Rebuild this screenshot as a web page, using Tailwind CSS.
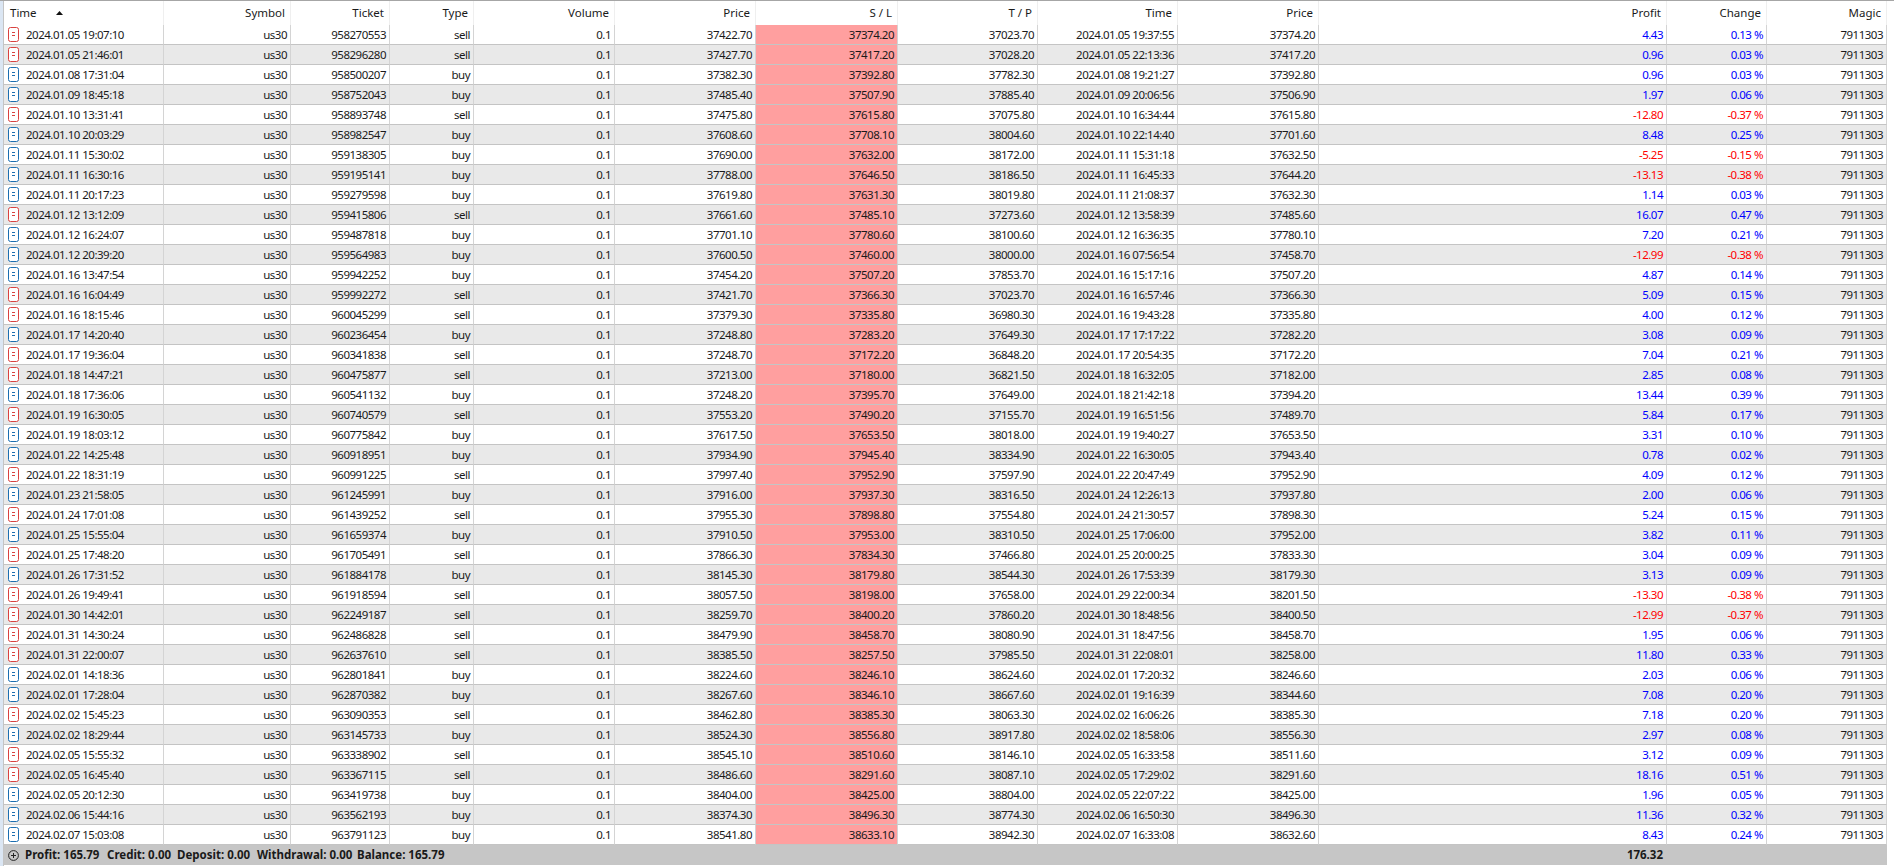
<!DOCTYPE html>
<html lang="en">
<head>
<meta charset="utf-8">
<title>History</title>
<script src="https://cdn.jsdelivr.net/npm/@tailwindcss/browser@4"></script>
</head>
<body class="bg-white">
<svg width="0" height="0" class="absolute">
<symbol id="s" viewBox="0 0 11 15"><rect x="0.5" y="0.5" width="10" height="14" rx="2" fill="#fff" stroke="#d9423f"/><path d="M4 5.5h3M4 8.5h3" stroke="#d9423f"/></symbol>
<symbol id="b" viewBox="0 0 11 15"><rect x="0.5" y="0.5" width="10" height="14" rx="2" fill="#fff" stroke="#1c6eb0"/><path d="M4 5.5h3M4 8.5h3" stroke="#1c6eb0"/></symbol>
</svg>
<div class="flex flex-col w-[1894px] h-[866px] overflow-hidden font-['Noto_Sans','Open_Sans',sans-serif] text-[11.5px] text-[#1a1a1a]">
<div class="h-px bg-[#a6a6a6]"></div>
<div class="flex flex-1">
<div class="w-[3px] bg-[#dbe6f3]"></div>
<div class="w-px bg-[#c4c4c4]"></div>
<div class="w-[1883px] flex flex-col">
<table class="table-fixed w-[1883px] border-separate border-spacing-0 [&_th]:h-[24px] [&_th]:font-normal [&_th]:p-0 [&_th]:pr-[5px] [&_th]:text-right [&_th]:border-r [&_th]:border-r-[#efefef] [&_td]:h-[20px] [&_td]:p-0 [&_td]:pr-[3px] [&_td]:text-right [&_td]:tracking-[-0.5px] [&_td]:leading-[19px] [&_td]:border-r [&_td]:border-b [&_td]:border-r-[#d4d4d4] [&_td]:border-b-[#c4c4c4] [&_tbody_tr:nth-child(even)]:bg-[#e9e9e9] [&_td:nth-child(7)]:bg-[#ff9f9f] [&_td:nth-child(11)]:text-[#0000ff] [&_td:nth-child(12)]:text-[#0000ff]">
<colgroup><col class="w-[160px]"><col class="w-[127px]"><col class="w-[99px]"><col class="w-[84px]"><col class="w-[141px]"><col class="w-[141px]"><col class="w-[142px]"><col class="w-[140px]"><col class="w-[140px]"><col class="w-[141px]"><col class="w-[348px]"><col class="w-[100px]"><col class="w-[120px]"></colgroup>
<thead><tr>
<th><div class="flex items-center pl-[6px]"><span class="w-[46px] text-left">Time</span><svg width="7" height="4" viewBox="0 0 7 4"><path d="M0 4L3.5 0L7 4Z" fill="#111"/></svg></div></th>
<th>Symbol</th><th>Ticket</th><th>Type</th><th>Volume</th><th>Price</th><th>S / L</th><th>T / P</th><th>Time</th><th>Price</th><th>Profit</th><th>Change</th><th>Magic</th>
</tr></thead>
<tbody>
<tr><td><div class="flex items-center gap-[7px] pl-[4px]"><svg width="11" height="15"><use href="#s"/></svg>2024.01.05 19:07:10</div></td><td>us30</td><td>958270553</td><td>sell</td><td>0.1</td><td>37422.70</td><td>37374.20</td><td>37023.70</td><td>2024.01.05 19:37:55</td><td>37374.20</td><td>4.43</td><td>0.13 %</td><td>7911303</td></tr>
<tr><td><div class="flex items-center gap-[7px] pl-[4px]"><svg width="11" height="15"><use href="#s"/></svg>2024.01.05 21:46:01</div></td><td>us30</td><td>958296280</td><td>sell</td><td>0.1</td><td>37427.70</td><td>37417.20</td><td>37028.20</td><td>2024.01.05 22:13:36</td><td>37417.20</td><td>0.96</td><td>0.03 %</td><td>7911303</td></tr>
<tr><td><div class="flex items-center gap-[7px] pl-[4px]"><svg width="11" height="15"><use href="#b"/></svg>2024.01.08 17:31:04</div></td><td>us30</td><td>958500207</td><td>buy</td><td>0.1</td><td>37382.30</td><td>37392.80</td><td>37782.30</td><td>2024.01.08 19:21:27</td><td>37392.80</td><td>0.96</td><td>0.03 %</td><td>7911303</td></tr>
<tr><td><div class="flex items-center gap-[7px] pl-[4px]"><svg width="11" height="15"><use href="#b"/></svg>2024.01.09 18:45:18</div></td><td>us30</td><td>958752043</td><td>buy</td><td>0.1</td><td>37485.40</td><td>37507.90</td><td>37885.40</td><td>2024.01.09 20:06:56</td><td>37506.90</td><td>1.97</td><td>0.06 %</td><td>7911303</td></tr>
<tr><td><div class="flex items-center gap-[7px] pl-[4px]"><svg width="11" height="15"><use href="#s"/></svg>2024.01.10 13:31:41</div></td><td>us30</td><td>958893748</td><td>sell</td><td>0.1</td><td>37475.80</td><td>37615.80</td><td>37075.80</td><td>2024.01.10 16:34:44</td><td>37615.80</td><td class="text-[#ff0000]!">-12.80</td><td class="text-[#ff0000]!">-0.37 %</td><td>7911303</td></tr>
<tr><td><div class="flex items-center gap-[7px] pl-[4px]"><svg width="11" height="15"><use href="#b"/></svg>2024.01.10 20:03:29</div></td><td>us30</td><td>958982547</td><td>buy</td><td>0.1</td><td>37608.60</td><td>37708.10</td><td>38004.60</td><td>2024.01.10 22:14:40</td><td>37701.60</td><td>8.48</td><td>0.25 %</td><td>7911303</td></tr>
<tr><td><div class="flex items-center gap-[7px] pl-[4px]"><svg width="11" height="15"><use href="#b"/></svg>2024.01.11 15:30:02</div></td><td>us30</td><td>959138305</td><td>buy</td><td>0.1</td><td>37690.00</td><td>37632.00</td><td>38172.00</td><td>2024.01.11 15:31:18</td><td>37632.50</td><td class="text-[#ff0000]!">-5.25</td><td class="text-[#ff0000]!">-0.15 %</td><td>7911303</td></tr>
<tr><td><div class="flex items-center gap-[7px] pl-[4px]"><svg width="11" height="15"><use href="#b"/></svg>2024.01.11 16:30:16</div></td><td>us30</td><td>959195141</td><td>buy</td><td>0.1</td><td>37788.00</td><td>37646.50</td><td>38186.50</td><td>2024.01.11 16:45:33</td><td>37644.20</td><td class="text-[#ff0000]!">-13.13</td><td class="text-[#ff0000]!">-0.38 %</td><td>7911303</td></tr>
<tr><td><div class="flex items-center gap-[7px] pl-[4px]"><svg width="11" height="15"><use href="#b"/></svg>2024.01.11 20:17:23</div></td><td>us30</td><td>959279598</td><td>buy</td><td>0.1</td><td>37619.80</td><td>37631.30</td><td>38019.80</td><td>2024.01.11 21:08:37</td><td>37632.30</td><td>1.14</td><td>0.03 %</td><td>7911303</td></tr>
<tr><td><div class="flex items-center gap-[7px] pl-[4px]"><svg width="11" height="15"><use href="#s"/></svg>2024.01.12 13:12:09</div></td><td>us30</td><td>959415806</td><td>sell</td><td>0.1</td><td>37661.60</td><td>37485.10</td><td>37273.60</td><td>2024.01.12 13:58:39</td><td>37485.60</td><td>16.07</td><td>0.47 %</td><td>7911303</td></tr>
<tr><td><div class="flex items-center gap-[7px] pl-[4px]"><svg width="11" height="15"><use href="#b"/></svg>2024.01.12 16:24:07</div></td><td>us30</td><td>959487818</td><td>buy</td><td>0.1</td><td>37701.10</td><td>37780.60</td><td>38100.60</td><td>2024.01.12 16:36:35</td><td>37780.10</td><td>7.20</td><td>0.21 %</td><td>7911303</td></tr>
<tr><td><div class="flex items-center gap-[7px] pl-[4px]"><svg width="11" height="15"><use href="#b"/></svg>2024.01.12 20:39:20</div></td><td>us30</td><td>959564983</td><td>buy</td><td>0.1</td><td>37600.50</td><td>37460.00</td><td>38000.00</td><td>2024.01.16 07:56:54</td><td>37458.70</td><td class="text-[#ff0000]!">-12.99</td><td class="text-[#ff0000]!">-0.38 %</td><td>7911303</td></tr>
<tr><td><div class="flex items-center gap-[7px] pl-[4px]"><svg width="11" height="15"><use href="#b"/></svg>2024.01.16 13:47:54</div></td><td>us30</td><td>959942252</td><td>buy</td><td>0.1</td><td>37454.20</td><td>37507.20</td><td>37853.70</td><td>2024.01.16 15:17:16</td><td>37507.20</td><td>4.87</td><td>0.14 %</td><td>7911303</td></tr>
<tr><td><div class="flex items-center gap-[7px] pl-[4px]"><svg width="11" height="15"><use href="#s"/></svg>2024.01.16 16:04:49</div></td><td>us30</td><td>959992272</td><td>sell</td><td>0.1</td><td>37421.70</td><td>37366.30</td><td>37023.70</td><td>2024.01.16 16:57:46</td><td>37366.30</td><td>5.09</td><td>0.15 %</td><td>7911303</td></tr>
<tr><td><div class="flex items-center gap-[7px] pl-[4px]"><svg width="11" height="15"><use href="#s"/></svg>2024.01.16 18:15:46</div></td><td>us30</td><td>960045299</td><td>sell</td><td>0.1</td><td>37379.30</td><td>37335.80</td><td>36980.30</td><td>2024.01.16 19:43:28</td><td>37335.80</td><td>4.00</td><td>0.12 %</td><td>7911303</td></tr>
<tr><td><div class="flex items-center gap-[7px] pl-[4px]"><svg width="11" height="15"><use href="#b"/></svg>2024.01.17 14:20:40</div></td><td>us30</td><td>960236454</td><td>buy</td><td>0.1</td><td>37248.80</td><td>37283.20</td><td>37649.30</td><td>2024.01.17 17:17:22</td><td>37282.20</td><td>3.08</td><td>0.09 %</td><td>7911303</td></tr>
<tr><td><div class="flex items-center gap-[7px] pl-[4px]"><svg width="11" height="15"><use href="#s"/></svg>2024.01.17 19:36:04</div></td><td>us30</td><td>960341838</td><td>sell</td><td>0.1</td><td>37248.70</td><td>37172.20</td><td>36848.20</td><td>2024.01.17 20:54:35</td><td>37172.20</td><td>7.04</td><td>0.21 %</td><td>7911303</td></tr>
<tr><td><div class="flex items-center gap-[7px] pl-[4px]"><svg width="11" height="15"><use href="#s"/></svg>2024.01.18 14:47:21</div></td><td>us30</td><td>960475877</td><td>sell</td><td>0.1</td><td>37213.00</td><td>37180.00</td><td>36821.50</td><td>2024.01.18 16:32:05</td><td>37182.00</td><td>2.85</td><td>0.08 %</td><td>7911303</td></tr>
<tr><td><div class="flex items-center gap-[7px] pl-[4px]"><svg width="11" height="15"><use href="#b"/></svg>2024.01.18 17:36:06</div></td><td>us30</td><td>960541132</td><td>buy</td><td>0.1</td><td>37248.20</td><td>37395.70</td><td>37649.00</td><td>2024.01.18 21:42:18</td><td>37394.20</td><td>13.44</td><td>0.39 %</td><td>7911303</td></tr>
<tr><td><div class="flex items-center gap-[7px] pl-[4px]"><svg width="11" height="15"><use href="#s"/></svg>2024.01.19 16:30:05</div></td><td>us30</td><td>960740579</td><td>sell</td><td>0.1</td><td>37553.20</td><td>37490.20</td><td>37155.70</td><td>2024.01.19 16:51:56</td><td>37489.70</td><td>5.84</td><td>0.17 %</td><td>7911303</td></tr>
<tr><td><div class="flex items-center gap-[7px] pl-[4px]"><svg width="11" height="15"><use href="#b"/></svg>2024.01.19 18:03:12</div></td><td>us30</td><td>960775842</td><td>buy</td><td>0.1</td><td>37617.50</td><td>37653.50</td><td>38018.00</td><td>2024.01.19 19:40:27</td><td>37653.50</td><td>3.31</td><td>0.10 %</td><td>7911303</td></tr>
<tr><td><div class="flex items-center gap-[7px] pl-[4px]"><svg width="11" height="15"><use href="#b"/></svg>2024.01.22 14:25:48</div></td><td>us30</td><td>960918951</td><td>buy</td><td>0.1</td><td>37934.90</td><td>37945.40</td><td>38334.90</td><td>2024.01.22 16:30:05</td><td>37943.40</td><td>0.78</td><td>0.02 %</td><td>7911303</td></tr>
<tr><td><div class="flex items-center gap-[7px] pl-[4px]"><svg width="11" height="15"><use href="#s"/></svg>2024.01.22 18:31:19</div></td><td>us30</td><td>960991225</td><td>sell</td><td>0.1</td><td>37997.40</td><td>37952.90</td><td>37597.90</td><td>2024.01.22 20:47:49</td><td>37952.90</td><td>4.09</td><td>0.12 %</td><td>7911303</td></tr>
<tr><td><div class="flex items-center gap-[7px] pl-[4px]"><svg width="11" height="15"><use href="#b"/></svg>2024.01.23 21:58:05</div></td><td>us30</td><td>961245991</td><td>buy</td><td>0.1</td><td>37916.00</td><td>37937.30</td><td>38316.50</td><td>2024.01.24 12:26:13</td><td>37937.80</td><td>2.00</td><td>0.06 %</td><td>7911303</td></tr>
<tr><td><div class="flex items-center gap-[7px] pl-[4px]"><svg width="11" height="15"><use href="#s"/></svg>2024.01.24 17:01:08</div></td><td>us30</td><td>961439252</td><td>sell</td><td>0.1</td><td>37955.30</td><td>37898.80</td><td>37554.80</td><td>2024.01.24 21:30:57</td><td>37898.30</td><td>5.24</td><td>0.15 %</td><td>7911303</td></tr>
<tr><td><div class="flex items-center gap-[7px] pl-[4px]"><svg width="11" height="15"><use href="#b"/></svg>2024.01.25 15:55:04</div></td><td>us30</td><td>961659374</td><td>buy</td><td>0.1</td><td>37910.50</td><td>37953.00</td><td>38310.50</td><td>2024.01.25 17:06:00</td><td>37952.00</td><td>3.82</td><td>0.11 %</td><td>7911303</td></tr>
<tr><td><div class="flex items-center gap-[7px] pl-[4px]"><svg width="11" height="15"><use href="#s"/></svg>2024.01.25 17:48:20</div></td><td>us30</td><td>961705491</td><td>sell</td><td>0.1</td><td>37866.30</td><td>37834.30</td><td>37466.80</td><td>2024.01.25 20:00:25</td><td>37833.30</td><td>3.04</td><td>0.09 %</td><td>7911303</td></tr>
<tr><td><div class="flex items-center gap-[7px] pl-[4px]"><svg width="11" height="15"><use href="#b"/></svg>2024.01.26 17:31:52</div></td><td>us30</td><td>961884178</td><td>buy</td><td>0.1</td><td>38145.30</td><td>38179.80</td><td>38544.30</td><td>2024.01.26 17:53:39</td><td>38179.30</td><td>3.13</td><td>0.09 %</td><td>7911303</td></tr>
<tr><td><div class="flex items-center gap-[7px] pl-[4px]"><svg width="11" height="15"><use href="#s"/></svg>2024.01.26 19:49:41</div></td><td>us30</td><td>961918594</td><td>sell</td><td>0.1</td><td>38057.50</td><td>38198.00</td><td>37658.00</td><td>2024.01.29 22:00:34</td><td>38201.50</td><td class="text-[#ff0000]!">-13.30</td><td class="text-[#ff0000]!">-0.38 %</td><td>7911303</td></tr>
<tr><td><div class="flex items-center gap-[7px] pl-[4px]"><svg width="11" height="15"><use href="#s"/></svg>2024.01.30 14:42:01</div></td><td>us30</td><td>962249187</td><td>sell</td><td>0.1</td><td>38259.70</td><td>38400.20</td><td>37860.20</td><td>2024.01.30 18:48:56</td><td>38400.50</td><td class="text-[#ff0000]!">-12.99</td><td class="text-[#ff0000]!">-0.37 %</td><td>7911303</td></tr>
<tr><td><div class="flex items-center gap-[7px] pl-[4px]"><svg width="11" height="15"><use href="#s"/></svg>2024.01.31 14:30:24</div></td><td>us30</td><td>962486828</td><td>sell</td><td>0.1</td><td>38479.90</td><td>38458.70</td><td>38080.90</td><td>2024.01.31 18:47:56</td><td>38458.70</td><td>1.95</td><td>0.06 %</td><td>7911303</td></tr>
<tr><td><div class="flex items-center gap-[7px] pl-[4px]"><svg width="11" height="15"><use href="#s"/></svg>2024.01.31 22:00:07</div></td><td>us30</td><td>962637610</td><td>sell</td><td>0.1</td><td>38385.50</td><td>38257.50</td><td>37985.50</td><td>2024.01.31 22:08:01</td><td>38258.00</td><td>11.80</td><td>0.33 %</td><td>7911303</td></tr>
<tr><td><div class="flex items-center gap-[7px] pl-[4px]"><svg width="11" height="15"><use href="#b"/></svg>2024.02.01 14:18:36</div></td><td>us30</td><td>962801841</td><td>buy</td><td>0.1</td><td>38224.60</td><td>38246.10</td><td>38624.60</td><td>2024.02.01 17:20:32</td><td>38246.60</td><td>2.03</td><td>0.06 %</td><td>7911303</td></tr>
<tr><td><div class="flex items-center gap-[7px] pl-[4px]"><svg width="11" height="15"><use href="#b"/></svg>2024.02.01 17:28:04</div></td><td>us30</td><td>962870382</td><td>buy</td><td>0.1</td><td>38267.60</td><td>38346.10</td><td>38667.60</td><td>2024.02.01 19:16:39</td><td>38344.60</td><td>7.08</td><td>0.20 %</td><td>7911303</td></tr>
<tr><td><div class="flex items-center gap-[7px] pl-[4px]"><svg width="11" height="15"><use href="#s"/></svg>2024.02.02 15:45:23</div></td><td>us30</td><td>963090353</td><td>sell</td><td>0.1</td><td>38462.80</td><td>38385.30</td><td>38063.30</td><td>2024.02.02 16:06:26</td><td>38385.30</td><td>7.18</td><td>0.20 %</td><td>7911303</td></tr>
<tr><td><div class="flex items-center gap-[7px] pl-[4px]"><svg width="11" height="15"><use href="#b"/></svg>2024.02.02 18:29:44</div></td><td>us30</td><td>963145733</td><td>buy</td><td>0.1</td><td>38524.30</td><td>38556.80</td><td>38917.80</td><td>2024.02.02 18:58:06</td><td>38556.30</td><td>2.97</td><td>0.08 %</td><td>7911303</td></tr>
<tr><td><div class="flex items-center gap-[7px] pl-[4px]"><svg width="11" height="15"><use href="#s"/></svg>2024.02.05 15:55:32</div></td><td>us30</td><td>963338902</td><td>sell</td><td>0.1</td><td>38545.10</td><td>38510.60</td><td>38146.10</td><td>2024.02.05 16:33:58</td><td>38511.60</td><td>3.12</td><td>0.09 %</td><td>7911303</td></tr>
<tr><td><div class="flex items-center gap-[7px] pl-[4px]"><svg width="11" height="15"><use href="#s"/></svg>2024.02.05 16:45:40</div></td><td>us30</td><td>963367115</td><td>sell</td><td>0.1</td><td>38486.60</td><td>38291.60</td><td>38087.10</td><td>2024.02.05 17:29:02</td><td>38291.60</td><td>18.16</td><td>0.51 %</td><td>7911303</td></tr>
<tr><td><div class="flex items-center gap-[7px] pl-[4px]"><svg width="11" height="15"><use href="#b"/></svg>2024.02.05 20:12:30</div></td><td>us30</td><td>963419738</td><td>buy</td><td>0.1</td><td>38404.00</td><td>38425.00</td><td>38804.00</td><td>2024.02.05 22:07:22</td><td>38425.00</td><td>1.96</td><td>0.05 %</td><td>7911303</td></tr>
<tr><td><div class="flex items-center gap-[7px] pl-[4px]"><svg width="11" height="15"><use href="#b"/></svg>2024.02.06 15:44:16</div></td><td>us30</td><td>963562193</td><td>buy</td><td>0.1</td><td>38374.30</td><td>38496.30</td><td>38774.30</td><td>2024.02.06 16:50:30</td><td>38496.30</td><td>11.36</td><td>0.32 %</td><td>7911303</td></tr>
<tr><td><div class="flex items-center gap-[7px] pl-[4px]"><svg width="11" height="15"><use href="#b"/></svg>2024.02.07 15:03:08</div></td><td>us30</td><td>963791123</td><td>buy</td><td>0.1</td><td>38541.80</td><td>38633.10</td><td>38942.30</td><td>2024.02.07 16:33:08</td><td>38632.60</td><td>8.43</td><td>0.24 %</td><td>7911303</td></tr>
</tbody>
</table>
<div class="h-[20px] flex items-center justify-between bg-[#c6c6c6] font-bold pl-[4px] pr-[224px]">
<div class="flex items-center">
<svg width="11" height="11" viewBox="0 0 11 11" class="mr-[6px]"><circle cx="5.5" cy="5.5" r="4.9" fill="none" stroke="#222"/><path d="M3 5.5h5M5.5 3v5" stroke="#222"/></svg>
<span class="w-[82px]">Profit: 165.79</span><span class="w-[70px]">Credit: 0.00</span><span class="w-[80px]">Deposit: 0.00</span><span class="w-[100px]">Withdrawal: 0.00</span><span>Balance: 165.79</span>
</div>
<span>176.32</span>
</div>
</div>
</div>
</div>
</body>
</html>
